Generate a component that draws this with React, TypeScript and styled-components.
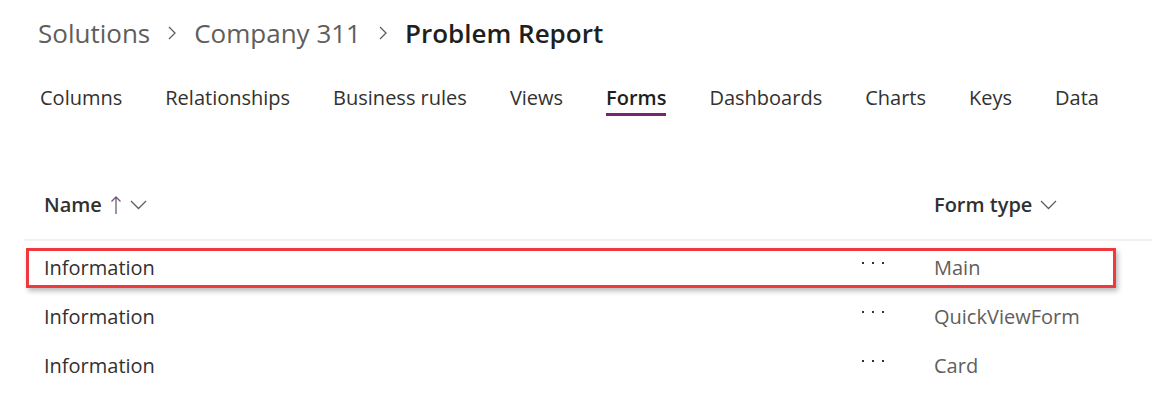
import React from 'react'
import styled, { createGlobalStyle } from 'styled-components'

const GlobalStyle = createGlobalStyle`
  body {
    margin: 0;
    background: #ffffff;
    font-family: "Open Sans", "Noto Sans", sans-serif;
  }
`

const Page = styled.div`
  width: 1152px;
  height: 403px;
  background: #ffffff;
  overflow: hidden;
`

const Breadcrumb = styled.div`
  height: 66px;
  display: flex;
  align-items: center;
  padding-left: 38px;
  gap: 17px;
  font-size: 26px;
`

const Crumb = styled.span<{ current?: boolean }>`
  color: ${(p) => (p.current ? '#201f1e' : '#605e5c')};
  font-weight: ${(p) => (p.current ? 600 : 400)};
`

const TabBar = styled.div`
  display: flex;
  gap: 43px;
  padding-left: 40px;
  margin-top: 18px;
`

const Tab = styled.div<{ active?: boolean }>`
  display: flex;
  flex-direction: column;
  font-size: 20px;
  line-height: 28px;
  color: ${(p) => (p.active ? '#201f1e' : '#323130')};
  font-weight: ${(p) => (p.active ? 600 : 400)};

  &::after {
    content: '';
    height: 3px;
    margin-top: 1px;
    background: ${(p) => (p.active ? '#742774' : 'transparent')};
  }
`

const Table = styled.div`
  margin-top: 61px;
  margin-left: 24px;
`

const Columns = styled.div`
  display: grid;
  grid-template-columns: 818px 72px 1fr;
  align-items: center;
  padding-left: 20px;
`

const HeaderRow = styled(Columns)`
  height: 64px;
  padding-bottom: 7px;
  box-sizing: border-box;
  border-bottom: 2px solid #f3f2f1;
`

const HeaderCell = styled.div`
  display: flex;
  align-items: center;
  gap: 8px;
  font-size: 20px;
  font-weight: 600;
  color: #323130;
`

const Row = styled(Columns)`
  position: relative;
  height: 49px;
  padding-top: 4px;
  box-sizing: border-box;
  font-size: 20px;
`

const Highlight = styled.div`
  position: absolute;
  left: 2px;
  right: 36px;
  top: 7px;
  height: 40px;
  box-sizing: border-box;
  border: 3px solid #f0393f;
  box-shadow: 2px 3px 5px rgba(0, 0, 0, 0.28);
  pointer-events: none;
`

const NameCell = styled.div`
  color: #323130;
`

const TypeCell = styled.div`
  color: #605e5c;
`

const More = styled.div`
  display: flex;
  gap: 8px;
  margin-top: -10px;

  span {
    width: 2px;
    height: 2px;
    background: #323130;
  }
`

const Chevron = () => (
  <svg width="10" height="16" viewBox="0 0 10 16">
    <path d="M2 2 L8 8 L2 14" fill="none" stroke="#605e5c" strokeWidth="1.3" />
  </svg>
)

const DownChevron = () => (
  <svg width="17" height="10" viewBox="0 0 17 10">
    <path d="M1 1 L8.5 8.5 L16 1" fill="none" stroke="#605e5c" strokeWidth="1.3" />
  </svg>
)

const UpArrow = () => (
  <svg width="12" height="20" viewBox="0 0 12 20">
    <path d="M6 2 V19 M1.5 6.5 L6 2 L10.5 6.5" fill="none" stroke="#6e5a80" strokeWidth="1.3" />
  </svg>
)

const tabs = ['Columns', 'Relationships', 'Business rules', 'Views', 'Forms', 'Dashboards', 'Charts', 'Keys', 'Data']

const forms = [
  { name: 'Information', type: 'Main', selected: true },
  { name: 'Information', type: 'QuickViewForm' },
  { name: 'Information', type: 'Card' },
]

const App = () => {
  return (
    <Page>
      <GlobalStyle />
      <Breadcrumb>
        <Crumb>Solutions</Crumb>
        <Chevron />
        <Crumb>Company 311</Crumb>
        <Chevron />
        <Crumb current>Problem Report</Crumb>
      </Breadcrumb>

      <TabBar>
        {tabs.map((t) => (
          <Tab key={t} active={t === 'Forms'}>{t}</Tab>
        ))}
      </TabBar>

      <Table>
        <HeaderRow>
          <HeaderCell>
            Name
            <UpArrow />
            <DownChevron />
          </HeaderCell>
          <div />
          <HeaderCell>
            Form type
            <DownChevron />
          </HeaderCell>
        </HeaderRow>

        {forms.map((f, index) => (
          <Row key={`formRow_${index + 1}`}>
            <NameCell>{f.name}</NameCell>
            <More><span /><span /><span /></More>
            <TypeCell>{f.type}</TypeCell>
            {f.selected && <Highlight />}
          </Row>
        ))}
      </Table>
    </Page>
  )
}

export default App
